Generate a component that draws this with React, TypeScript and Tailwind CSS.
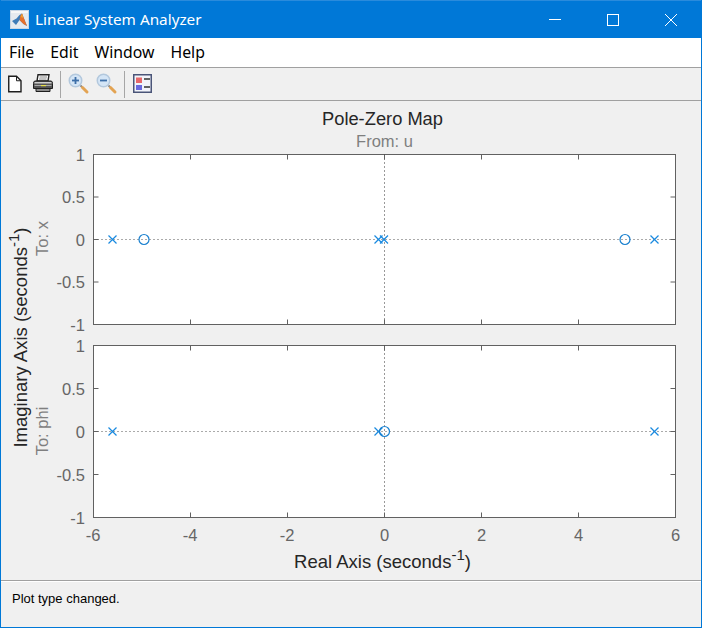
const menus = ["File", "Edit", "Window", "Help"]

// pole-zero marker positions along the real axis, in page pixels
const xPoles = [112.5, 378.5, 384, 654.5]
const xZeros = [144, 625]
const phiPoles = [112.5, 378.5, 654.5]
const phiZeros = [384.5]

function MatlabIcon() {
  return (
    <svg width="19" height="19" viewBox="0 0 19 19">
      <rect x="0.5" y="0.5" width="18" height="18" fill="#e6eaef" stroke="#c9d6e4" />
      <rect x="1" y="1" width="17" height="2" fill="#f7f7f7" />
      <path d="M2 11 L6.5 8.5 L9.5 5 L12 3.5 L17 16 L13.5 14 L9.5 10 L6 15 Z" fill="#3f7cb8" />
      <path d="M9.5 10 L10.5 5.5 L12 3.5 L17 16 L13.5 14 Z" fill="#e8702a" />
      <path d="M10.5 7 L12 3.5 L13.5 8 Z" fill="#f0a030" />
    </svg>
  )
}

function NewIcon() {
  return (
    <svg width="14" height="18" viewBox="0 0 14 18">
      <path d="M0.75 1.25 H8.5 L13 5.75 V16.75 H0.75 Z" fill="#fff" stroke="#1e1e1e" strokeWidth="1.4" />
      <path d="M8.5 1.25 V5.75 H13" fill="none" stroke="#1e1e1e" />
    </svg>
  )
}

function PrintIcon() {
  return (
    <svg width="20" height="19" viewBox="0 0 20 19">
      <path d="M5 0.75 H16 L15 7 H4 Z" fill="#fff" stroke="#222" strokeWidth="1.4" />
      <path d="M6.5 3 H14 M6 5 H13.5" stroke="#888" />
      <path d="M2 7 H18 Q19.5 7 19.5 9.5 V14.5 H0.5 V9.5 Q0.5 7 2 7 Z" fill="#555" stroke="#1e1e1e" />
      <rect x="1.5" y="8" width="17" height="1.5" fill="#cfcfcf" />
      <rect x="1.5" y="11" width="17" height="1" fill="#a9a9a9" />
      <rect x="8" y="11" width="5" height="1.2" fill="#e8e04a" />
      <path d="M3 14.5 H17 V17.5 H3 Z" fill="#8a8a8a" stroke="#1e1e1e" />
    </svg>
  )
}

function ZoomIcon({ plus }: { plus?: boolean }) {
  return (
    <svg width="22" height="22" viewBox="0 0 22 22">
      <circle cx="7.5" cy="7.5" r="6.25" fill="#d4e5f6" stroke="#b3c8dd" strokeWidth="1.5" />
      <path d="M4 7.5 H11" stroke="#3d6fa8" strokeWidth="1.8" />
      {plus && <path d="M7.5 4 V11" stroke="#3d6fa8" strokeWidth="1.8" />}
      <path d="M12.5 12.5 L14 14" stroke="#8a8a8a" strokeWidth="2" />
      <path d="M14.5 14.5 L19 19" stroke="#e3a352" strokeWidth="3" strokeLinecap="round" />
    </svg>
  )
}

function LegendIcon() {
  return (
    <svg width="19" height="19" viewBox="0 0 19 19">
      <rect x="0.75" y="0.75" width="17.5" height="17.5" fill="#f2f4fa" stroke="#4a5578" strokeWidth="1.5" />
      <rect x="3" y="3.5" width="6" height="5.5" fill="#e8686a" />
      <rect x="3" y="11" width="6" height="5" fill="#6a6ae0" />
      <path d="M11 5 H17 M11 13 H17" stroke="#333" strokeWidth="1.5" />
    </svg>
  )
}

function Pole({ x, y }: { x: number; y: number }) {
  return <path d={`M${x - 4} ${y - 4} L${x + 4} ${y + 4} M${x - 4} ${y + 4} L${x + 4} ${y - 4}`} stroke="#1a8ae0" strokeWidth="1.2" fill="none" />
}

function Zero({ x, y }: { x: number; y: number }) {
  return <circle cx={x} cy={y} r="5" stroke="#1a80cf" strokeWidth="1.2" fill="none" />
}

function Axes({ top, height, labels, poles, zeros, xTicks }: { top: number; height: number; labels: number[]; poles: number[]; zeros: number[]; xTicks?: boolean }) {
  const left = 93.5
  const right = 675.5
  const bottom = top + height
  const mid = top + height / 2
  const xs = [0, 1, 2, 3, 4, 5, 6].map((i) => left + i * 97)
  const yLabels = ["1", "0.5", "0", "-0.5", "-1"]
  return (
    <g>
      <rect x={left} y={top} width={right - left} height={height} fill="#fff" stroke="#616161" />
      <path d={`M${left} ${mid} H${right}`} stroke="#555" strokeDasharray="1 3" />
      <path d={`M384.5 ${top} V${bottom}`} stroke="#333" strokeDasharray="1 3" />
      {xs.map((x) => (
        <path key={x} d={`M${x} ${bottom} V${bottom - 5} M${x} ${top} V${top + 5}`} stroke="#616161" />
      ))}
      {labels.map((y, i) => (
        <g key={y}>
          <path d={`M${left} ${y} H${left + 5} M${right} ${y} H${right - 5}`} stroke="#616161" />
          <text x="85" y={y + 6} textAnchor="end" fontSize="16.5" fill="#666">
            {yLabels[i]}
          </text>
        </g>
      ))}
      {poles.map((x) => (
        <Pole key={x} x={x} y={mid} />
      ))}
      {zeros.map((x) => (
        <Zero key={x} x={x} y={mid} />
      ))}
      {xTicks &&
        ["-6", "-4", "-2", "0", "2", "4", "6"].map((t, i) => (
          <text key={t} x={xs[i] - (t.length > 1 ? 0.5 : 0)} y="541" textAnchor="middle" fontSize="16.5" fill="#666">
            {t}
          </text>
        ))}
    </g>
  )
}

function PoleZeroPlot() {
  return (
    <svg width="700" height="479" viewBox="1 101 700 479" style={{ fontFamily: '"Liberation Sans", Arial, sans-serif' }} className="block">
      <text x="382.5" y="125" textAnchor="middle" fontSize="18.3" fill="#262626">
        Pole-Zero Map
      </text>
      <text x="384.5" y="147" textAnchor="middle" fontSize="16.5" fill="#7f7f7f">
        From: u
      </text>
      <Axes top={154.5} height={170} labels={[154.5, 197, 239.5, 282, 324.5]} poles={xPoles} zeros={xZeros} />
      <Axes top={345.5} height={172} labels={[345.5, 388.5, 431.5, 474.5, 517.5]} poles={phiPoles} zeros={phiZeros} xTicks />
      <text transform="translate(47.5 238.5) rotate(-90)" textAnchor="middle" fontSize="16.5" fill="#7f7f7f">
        To: x
      </text>
      <text transform="translate(47.5 431) rotate(-90)" textAnchor="middle" fontSize="16.5" fill="#7f7f7f">
        To: phi
      </text>
      <text transform="translate(26.5 337.5) rotate(-90)" textAnchor="middle" fontSize="18.5" fill="#262626">
        Imaginary Axis (seconds<tspan dy="-8" fontSize="15">-1</tspan>
        <tspan dy="8">)</tspan>
      </text>
      <text x="382.5" y="568" textAnchor="middle" fontSize="18.5" fill="#262626">
        Real Axis (seconds<tspan dy="-8" fontSize="15">-1</tspan>
        <tspan dy="8">)</tspan>
      </text>
    </svg>
  )
}

export default function App() {
  return (
    <div className="flex h-[628px] w-[702px] flex-col overflow-hidden border-x border-b border-[#0078d7] bg-[#f0f0f0] font-['Noto_Sans',sans-serif]">
      <div className="-mx-px flex h-[38px] items-center border-t border-[#2a8bdc] bg-[#0078d7] pl-[10px] text-white">
        <MatlabIcon />
        <span className="ml-[6px] text-[15.3px]">Linear System Analyzer</span>
        <div className="ml-auto flex pr-[2px]">
          <div className="flex w-[58px] justify-center">
            <svg width="12" height="12" viewBox="0 0 12 12">
              <path d="M0 5.5 H12" stroke="#fff" />
            </svg>
          </div>
          <div className="flex w-[58px] justify-center">
            <svg width="12" height="12" viewBox="0 0 12 12">
              <rect x="0.5" y="0.5" width="11" height="11" fill="none" stroke="#fff" />
            </svg>
          </div>
          <div className="flex w-[58px] justify-center">
            <svg width="12" height="12" viewBox="0 0 12 12">
              <path d="M0 0 L12 12 M12 0 L0 12" stroke="#fff" />
            </svg>
          </div>
        </div>
      </div>
      <div className="-mx-px flex h-[29px] items-center gap-[16px] bg-white pl-[9px] text-[15.8px] text-black">
        {menus.map((m) => (
          <span key={m}>{m}</span>
        ))}
      </div>
      <div className="flex h-[34px] items-center border-y border-[#a0a0a0] pb-px pl-[7px]">
        <NewIcon />
        <div className="ml-[11px]">
          <PrintIcon />
        </div>
        <div className="ml-[7px] mt-px h-[27px] w-px bg-[#a6a6a6]" />
        <div className="ml-[7px]">
          <ZoomIcon plus />
        </div>
        <div className="ml-[6px]">
          <ZoomIcon />
        </div>
        <div className="ml-[6px] mt-px h-[27px] w-px bg-[#a6a6a6]" />
        <div className="ml-[8px]">
          <LegendIcon />
        </div>
      </div>
      <PoleZeroPlot />
      <div className="h-px bg-[#a0a0a0]" />
      <div className="border-t border-white pl-[11px] pt-[7px] font-['Liberation_Sans',sans-serif] text-[13px] text-black">
        Plot type changed.
      </div>
    </div>
  )
}
